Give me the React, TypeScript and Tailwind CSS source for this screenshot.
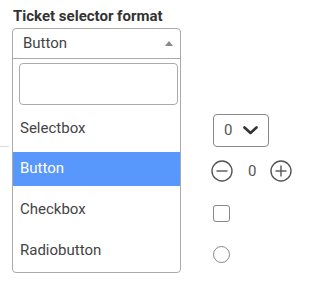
import React from "react";

const font = { fontFamily: "Roboto, 'Liberation Sans', sans-serif" };

function CircleIcon({ plus }: { plus?: boolean }) {
  return (
    <svg width="22" height="22" viewBox="0 0 22 22" fill="none">
      <circle cx="11" cy="11" r="10" stroke="#555" strokeWidth="1.4" />
      <line x1="5.5" y1="11" x2="16.5" y2="11" stroke="#555" strokeWidth="1.4" />
      {plus && <line x1="11" y1="5.5" x2="11" y2="16.5" stroke="#555" strokeWidth="1.4" />}
    </svg>
  );
}

export default function App() {
  const options = ["Selectbox", "Button", "Checkbox", "Radiobutton"];
  return (
    <div className="relative w-[318px] h-[290px] bg-white overflow-hidden" style={font}>
      <div className="absolute left-0 top-[146px] w-[9px] h-px bg-[#dddddd]" />
      <div className="flex">
        <div className="relative w-[181px] shrink-0 pl-[12px]">
          <div className="pl-[1px] pt-[6px] h-[26px] text-[15px] font-bold leading-[20px] text-[#333]">
            Ticket selector format
          </div>
          <div className="mt-[2px] w-[169px] border border-[#aaaaaa] rounded-[4px] bg-white">
            <div className="h-[30px] flex items-center justify-between pl-[10px] pr-[7px] text-[15px] text-[#444] border-b border-[#aaaaaa]">
              <span>Button</span>
              <span className="w-0 h-0 border-l-[4px] border-r-[4px] border-b-[5px] border-l-transparent border-r-transparent border-b-[#888888]" />
            </div>
            <div className="pt-[4px] pl-[6px] pr-[2px]">
              <div className="h-[42px] border border-[#aaaaaa] rounded-[4px]" />
            </div>
            <div className="mt-[6px] pb-[5px] flex flex-col gap-[6.67px]">
              {options.map((o) => (
                <div
                  key={o}
                  className={
                    "h-[34px] flex items-center pl-[7px] text-[15px] " +
                    (o === "Button" ? "bg-[#5897fb] text-white" : "text-[#444]")
                  }
                >
                  {o}
                </div>
              ))}
            </div>
          </div>
        </div>
        <div className="ml-[32px] pt-[114px] flex flex-col">
          <div className="w-[56px] h-[33px] border border-[#888888] rounded-[4px] flex items-center pl-[10px] text-[15px] text-[#555]">
            <span>0</span>
            <svg className="ml-[11px]" width="15" height="9" viewBox="0 0 15 9" fill="none">
              <path d="M1.5 1.5 L7.5 7 L13.5 1.5" stroke="#333" strokeWidth="2.6" strokeLinecap="round" strokeLinejoin="round" />
            </svg>
          </div>
          <div className="mt-[13px] -ml-[2px] flex items-center h-[22px]">
            <CircleIcon />
            <span className="ml-[15px] w-[8px] text-[15px] text-[#555] leading-none">0</span>
            <span className="ml-[14px]">
              <CircleIcon plus />
            </span>
          </div>
          <div className="mt-[23px] w-[17px] h-[17px] border border-[#888888] rounded-[3px]" />
          <div className="mt-[24px] w-[17px] h-[17px] border border-[#888888] rounded-full" />
        </div>
      </div>
    </div>
  );
}
